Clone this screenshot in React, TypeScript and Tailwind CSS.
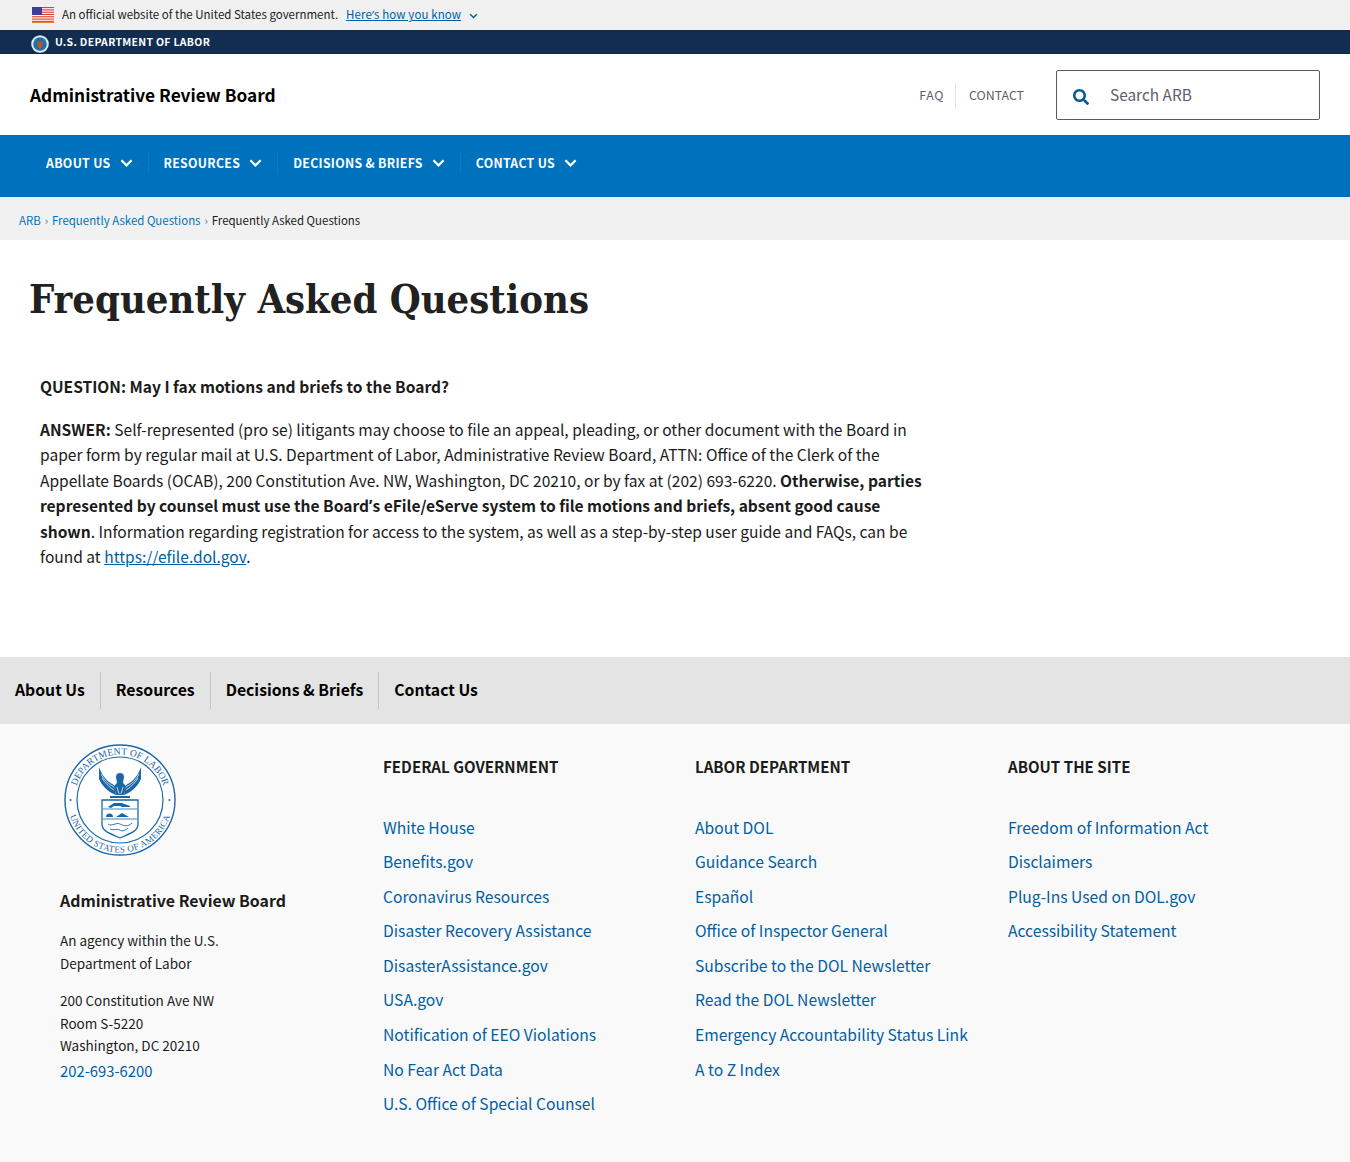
import React from "react";

const S = '"Noto Sans CJK SC", "Noto Sans", sans-serif';

function Apos() {
  return <span className="leading-none" style={{ fontFamily: '"Noto Sans", sans-serif' }}>’</span>;
}

function Chevron({ className = "" }: { className?: string }) {
  return (
    <svg viewBox="0 0 14 10" className={className} fill="none" stroke="currentColor" strokeWidth="2.4">
      <path d="M1.5 2 L7 7.5 L12.5 2" />
    </svg>
  );
}

function Flag() {
  const stripes = [];
  for (let i = 0; i < 7; i++) stripes.push(<rect key={i} x="0" y={i * 2.3} width="22" height="1.15" fill="#d8422e" />);
  return (
    <svg viewBox="0 0 22 16" className="w-[22px] h-4 shrink-0">
      <rect width="22" height="16" fill="#fff" />
      {stripes}
      <rect width="10" height="8" fill="#3a3f9a" />
      <rect y="14.9" width="22" height="1.1" fill="#e8803a" />
    </svg>
  );
}

function SmallSeal() {
  return (
    <svg viewBox="0 0 18 18" className="w-[18px] h-[18px] shrink-0 mt-[3px]">
      <circle cx="9" cy="9" r="8.8" fill="#dfe9f0" />
      <circle cx="9" cy="9" r="6.8" fill="#1f6fa8" />
      <path d="M6 7h6l-1 5-2 2-2-2z" fill="#b8562a" />
      <path d="M9 4l1 3H8z" fill="#3c7a3a" />
    </svg>
  );
}

function Seal() {
  return (
    <svg viewBox="0 0 112 112" className="w-28 h-28 block">
      <circle cx="56" cy="56" r="55" fill="#fff" stroke="#1b67a5" strokeWidth="1.4" />
      <circle cx="56" cy="56" r="43" fill="#fff" stroke="#1b67a5" strokeWidth="1.2" />
      <defs>
        <path id="sealTop" d="M 56 101.5 A 45.5 45.5 0 1 1 56.01 101.5" />
        <path id="sealBottom" d="M 56 3.5 A 52.5 52.5 0 1 0 56.01 3.5" />
      </defs>
      <text fontFamily="'Liberation Serif', serif" fontSize="9.6" fill="#1b67a5" letterSpacing="0.1">
        <textPath href="#sealTop" startOffset="50%" textAnchor="middle">DEPARTMENT OF LABOR</textPath>
      </text>
      <text fontFamily="'Liberation Serif', serif" fontSize="9" fill="#1b67a5" letterSpacing="0.35">
        <textPath href="#sealBottom" startOffset="50%" textAnchor="middle">UNITED STATES OF AMERICA</textPath>
      </text>
      <circle cx="6.5" cy="56" r="1" fill="#1b67a5" />
      <circle cx="105.5" cy="56" r="1" fill="#1b67a5" />
      <g fill="#1b67a5">
        <path d="M35 23 C38 31 42 37 50 41 L52 51 C44 48 38 42 35 35 Z" />
        <path d="M77 23 C74 31 70 37 62 41 L60 51 C68 48 74 42 77 35 Z" />
        <path d="M52 33 a4 4 0 0 1 8 0 l-1 6 3 3-2 9h-8l-2-9 3-3z" />
        <path d="M46 52 H66 V54 H46 Z" />
      </g>
      <path d="M37 30 C40 36 44 40 50 43 M39 27 C42 33 45 37 50 40 M38 34 C41 39 45 43 50 46 M75 30 C72 36 68 40 62 43 M73 27 C70 33 67 37 62 40 M74 34 C71 39 67 43 62 46 M53 43 L55 50 M59 43 L57 50" stroke="#fff" strokeWidth="0.7" fill="none" />
      <path d="M38 56 H74 V80 C74 88 64 90 56 94 C48 90 38 88 38 80 Z" fill="#fff" stroke="#1b67a5" strokeWidth="1.3" />
      <path d="M39 65 H73 M39 75 H73" stroke="#1b67a5" strokeWidth="0.8" />
      <path d="M44 63 l6 -4 h8 l8 3 v1 h-8 l-2 -1 h-6 l-3 2z" fill="#1b67a5" />
      <path d="M42 73 a3.5 3.5 0 0 1 7 0z M52 73 l6 -4 7 4z" fill="#1b67a5" />
      <path d="M44 80 c4 3 8 -2 12 0 s8 3 12 -1 M46 85 c4 2 8 -1 10 1 s6 0 8 -2" stroke="#1b67a5" strokeWidth="0.9" fill="none" />
    </svg>
  );
}

const navItems = ["ABOUT US", "RESOURCES", "DECISIONS & BRIEFS", "CONTACT US"];
const federal = ["White House", "Benefits.gov", "Coronavirus Resources", "Disaster Recovery Assistance", "DisasterAssistance.gov", "USA.gov", "Notification of EEO Violations", "No Fear Act Data", "U.S. Office of Special Counsel"];
const labor = ["About DOL", "Guidance Search", "Español", "Office of Inspector General", "Subscribe to the DOL Newsletter", "Read the DOL Newsletter", "Emergency Accountability Status Link", "A to Z Index"];
const site = ["Freedom of Information Act", "Disclaimers", "Plug-Ins Used on DOL.gov", "Accessibility Statement"];

function FooterCol({ title, links, className }: { title: string; links: string[]; className: string }) {
  return (
    <div className={className}>
      <h3 className="text-[15.1px] font-bold leading-[24px] text-[#1b1b1b] mt-[30px] mb-[37.5px]">{title}</h3>
      <ul className="flex flex-col">
        {links.map((l) => (
          <li key={l} className="h-[34.6px] leading-[24px] text-[15.65px] text-[#005ea2] whitespace-nowrap">{l}</li>
        ))}
      </ul>
    </div>
  );
}

export default function App() {
  return (
    <div className="bg-white min-h-[1162px] text-[#1b1b1b] overflow-hidden" style={{ fontFamily: S }}>
      <div className="h-[30px] bg-[#f0f0f0] flex items-center pl-8 text-[11.5px]">
        <Flag />
        <span className="ml-2 text-[#1b1b1b]">An official website of the United States government.</span>
        <a className="ml-2 text-[#005ea2] underline tracking-[0.1px]">Here<Apos />s how you know</a>
        <Chevron className="w-[9px] h-[6px] ml-2 mt-[2px] text-[#005ea2]" />
      </div>
      <div className="h-[24px] bg-[#112e51] flex items-center pl-[31px]">
        <SmallSeal />
        <span className="ml-[6px] text-white text-[10.5px] font-bold tracking-[0.3px] -mt-[1px]">U.S. DEPARTMENT OF LABOR</span>
      </div>
      <header className="h-[81px] bg-white flex items-center pl-[30px] pr-[30px]">
        <div className="text-[17.3px] font-bold text-black">Administrative Review Board</div>
        <div className="ml-auto flex items-center text-[12.4px] text-[#5b616b]">
          <span className="pr-[11px] h-[24px] flex items-center border-r border-[#e4e4e4] mt-[2px] tracking-[0.6px]">FAQ</span>
          <span className="pl-[13px] h-[24px] flex items-center mt-[2px]">CONTACT</span>
          <div className="ml-[32px] w-[264px] h-[50px] border border-[#565c65] rounded-[2px] flex items-center bg-white mt-[1px]">
            <svg viewBox="0 0 512 512" className="w-4 h-4 ml-4 mt-1 text-[#0b5a94]" fill="currentColor">
              <path d="M505 442.7L405.3 343c-4.500-4.500-10.600-7-17-7H372c27.600-35.300 44-79.700 44-128C416 93.100 322.900 0 208 0S0 93.100 0 208s93.100 208 208 208c48.300 0 92.700-16.400 128-44v16.300c0 6.400 2.500 12.500 7 17l99.700 99.700c9.400 9.400 24.600 9.400 33.900 0l28.300-28.300c9.400-9.400 9.400-24.600.1-34zM208 336c-70.700 0-128-57.200-128-128 0-70.700 57.200-128 128-128 70.700 0 128 57.200 128 128 0 70.700-57.200 128-128 128z" />
            </svg>
            <span className="ml-[21px] text-[15.4px] text-[#5b616b] -mt-[1px]">Search ARB</span>
          </div>
        </div>
      </header>
      <nav className="h-[62px] bg-[#0071bc] flex items-start pl-[31px] pt-[17px]">
        {navItems.map((n, i) => (
          <div key={n} className={`flex items-center h-[22px] px-[15px] ${i > 0 ? "border-l border-[#0a7cc6]" : ""}`}>
            <span className="text-white text-[12.3px] font-bold tracking-[0.3px]">{n}</span>
            <Chevron className="w-[13px] h-[10px] ml-[9px] text-white" />
          </div>
        ))}
      </nav>
      <div className="h-[43px] bg-[#f1f1f1] flex items-center pl-[19px] pt-[4px] text-[11.45px]">
        <a className="text-[#0071bc]">ARB</a>
        <span className="mx-[4px] text-[#5b616b] text-[11px]">›</span>
        <a className="text-[#0071bc]">Frequently Asked Questions</a>
        <span className="mx-[4px] text-[#5b616b] text-[11px]">›</span>
        <span className="text-[#1b1b1b]">Frequently Asked Questions</span>
      </div>
      <main className="h-[417px] pl-[29px] pt-[34px]">
        <h1 className="text-[39.6px] font-bold leading-[50px] text-[#212121] whitespace-nowrap font-stretch-condensed" style={{ fontFamily: '"DejaVu Serif", serif' }}>
          Frequently Asked Questions
        </h1>
        <div className="pl-[11px] w-[896px] text-[15.55px] leading-[25.5px] mt-[49.5px]">
          <p className="font-bold">QUESTION: May I fax motions and briefs to the Board?</p>
          <p className="mt-[17.5px]">
            <strong>ANSWER:</strong> Self-represented (pro se) litigants may choose to file an appeal, pleading, or other document with the Board in paper form by regular mail at U.S. Department of Labor, Administrative Review Board, ATTN: Office of the Clerk of the Appellate Boards (OCAB), 200 Constitution Ave. NW, Washington, DC 20210, or by fax at (202) 693-6220. <strong>Otherwise, parties represented by counsel must use the Board<Apos />s eFile/eServe system to file motions and briefs, absent good cause shown</strong>. Information regarding registration for access to the system, as well as a step-by-step user guide and FAQs, can be found at <a className="text-[#005ea2] underline">https://efile.dol.gov</a>.
          </p>
        </div>
      </main>
      <div className="h-[67px] bg-[#e4e4e4] flex items-center text-[15.75px] font-bold text-black">
        {["About Us", "Resources", "Decisions & Briefs", "Contact Us"].map((n, i) => (
          <div key={n} className={`h-[37px] flex items-center px-[15px] pb-[2px] ${i > 0 ? "border-l border-[#c4c4c4]" : ""}`}>{n}</div>
        ))}
      </div>
      <footer className="h-[438px] bg-[#f9f9f9] flex items-start">
        <div className="w-[383px] pl-[60px] pt-5 shrink-0">
          <div className="ml-1"><Seal /></div>
          <div className="mt-[33px] text-[15.9px] font-bold leading-[24px]">Administrative Review Board</div>
          <p className="mt-[16px] text-[13.5px] leading-[22.5px]">An agency within the U.S.<br />Department of Labor</p>
          <p className="mt-[15px] text-[13.5px] leading-[22.5px]">200 Constitution Ave NW<br />Room S-5220<br />Washington, DC 20210</p>
          <p className="mt-[1px] text-[14.8px] leading-[26px] text-[#005ea2]">202-693-6200</p>
        </div>
        <FooterCol title="FEDERAL GOVERNMENT" links={federal} className="w-[312px] shrink-0" />
        <FooterCol title="LABOR DEPARTMENT" links={labor} className="w-[313px] shrink-0" />
        <FooterCol title="ABOUT THE SITE" links={site} className="flex-1" />
      </footer>
    </div>
  );
}
